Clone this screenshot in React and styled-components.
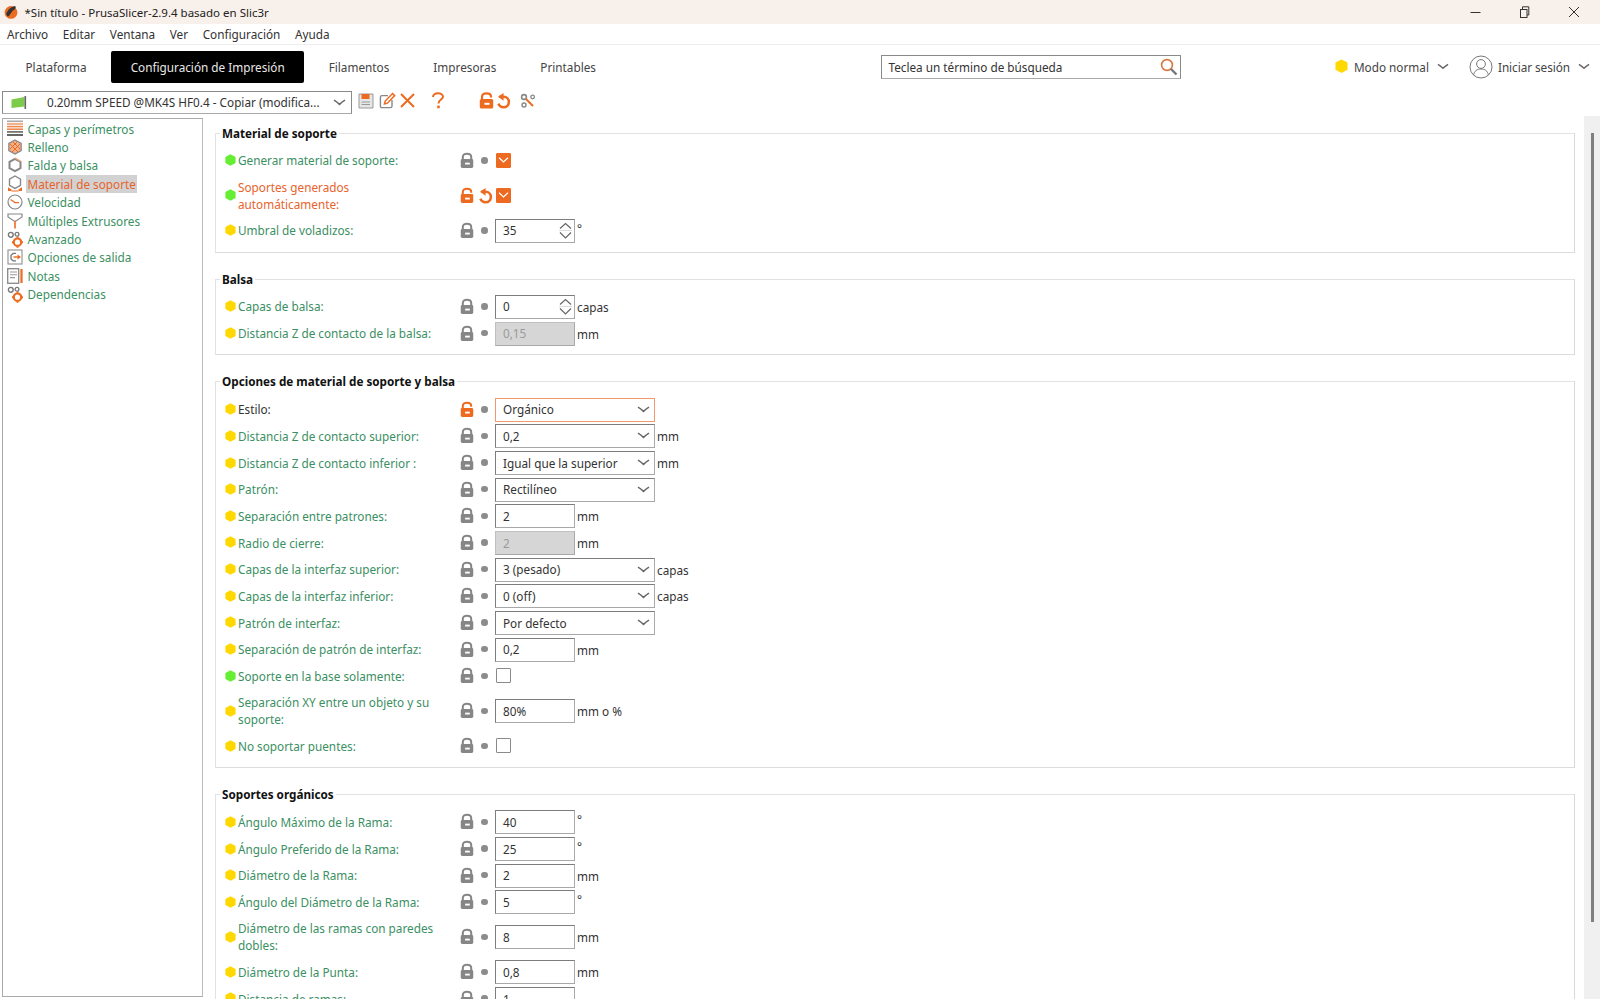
import React from "react";
import styled, { createGlobalStyle } from "styled-components";

const ORANGE = "#ed6b21";
const GREEN = "#3b8f62";
const FONT = `"Noto Sans", "Open Sans", sans-serif`;

const Global = createGlobalStyle`
  html, body { margin: 0; padding: 0; height: 100%; overflow: hidden; background: #fff; }
  body { font-family: ${FONT}; font-size: 11.75px; color: #333; }
  #root { height: 100%; }
  * { box-sizing: border-box; }
`;

const Page = styled.div`display: flex; flex-direction: column; height: 999px; overflow: hidden;`;

const TitleBar = styled.div`display: flex; align-items: center; height: 24px; background: #f8f0eb; padding-left: 4px;`;
const TitleText = styled.span`margin-left: 6.5px; font-size: 11.5px; color: #222;`;
const WinControls = styled.div`margin-left: auto; display: flex; padding-right: 2px;`;
const WinButton = styled.div`width: 49px; height: 24px; display: flex; align-items: center; justify-content: center; color: #333;`;

const MenuBar = styled.div`display: flex; gap: 14.6px; align-items: center; padding-left: 7px; border-bottom: 1px solid #eee; height: 21px; color: #333;`;

const TabRow = styled.div`display: flex; align-items: center; height: 45px; padding: 0 0 1.5px 6px;`;
const Tab = styled.div`
  padding: 0 19.5px; height: 32px; display: flex; align-items: center; margin-right: 5px; border-radius: 2px;
  background: ${p => (p.$active ? "#000" : "transparent")};
  color: ${p => (p.$active ? "#e8e8e8" : "#444")};
`;
const Search = styled.div`
  margin-left: 261px; width: 300px; height: 24px; border: 1px solid #8a8a8a; border-bottom-color: #aaa; display: flex; align-items: center;
  justify-content: space-between; padding: 0 1px 0 6px; color: #333;
`;
const RightTools = styled.div`margin-left: auto; display: flex; align-items: center; padding-right: 10px;`;
const ModeText = styled.span`margin-left: 6px; margin-right: 8px; color: #444;`;
const LoginText = styled.span`margin-left: 5px; margin-right: 8px; color: #444; letter-spacing: -0.05px;`;
const UserWrap = styled.span`margin-left: 20px; display: flex;`;

const Toolbar = styled.div`display: flex; align-items: center; height: 25px; padding-left: 2px;`;
const Combo = styled.div`
  width: 350px; height: 23px; border: 1px solid #8a8a8a; border-bottom-color: #aaa; display: flex; align-items: center; padding: 0 5px 1px 8px;
`;
const ComboText = styled.span`margin-left: 20px; flex: 1; white-space: nowrap; color: #333;`;
const ToolIcons = styled.div`display: flex; align-items: center; margin: -4px 0 0 6px;`;
const ToolIcon = styled.span`display: flex; margin-right: ${p => p.$mr || 0}px;`;

const Main = styled.div`flex: 1; display: flex; min-height: 0; padding-top: 1px;`;

const Tree = styled.nav`
  width: 201px; margin: 2px 0 2px 2px; border: 1px solid #aaa; border-right-color: #bbb; padding: 0.5px 0 0 4px; flex: none;
`;
const TreeItem = styled.div`display: flex; align-items: center; height: 18.4px;`;
const TreeIconBox = styled.span`width: 19px; height: 18px; display: flex; align-items: center; justify-content: flex-start; flex: none;`;
const TreeLabel = styled.span`
  color: ${p => (p.$active ? "#e8632b" : GREEN)};
  background: ${p => (p.$active ? "#d2d2d2" : "transparent")};
  padding: 0 1.5px; line-height: 18px;
`;

const Content = styled.div`flex: 1; min-width: 0; overflow: hidden; padding: 16.5px 9px 0 12px;`;
const Scrollbar = styled.div`width: 16px; flex: none; background: #f0f0f0; padding-top: 17px; padding-left: 7px;`;
const Thumb = styled.div`width: 2.5px; height: 789px; background: #808080;`;

const Group = styled.section`
  border: 1px solid #e2e2e2; border-bottom-color: #dcdcdc; border-right-color: #d8d8d8; padding: 0 9px 7.5px; margin-bottom: 26px;
`;
const GroupTitle = styled.h3`
  margin: -10px 0 6px -5px; padding: 0 2px; height: 18px; line-height: 18px; width: fit-content; background: #fff; font-size: 11.7px; font-weight: 700; color: #111;
`;
const Row = styled.div`
  display: grid; grid-template-columns: 13px 222px 14px 21px auto; align-items: center;
  min-height: ${p => (p.$tall ? 43.3 : 26.67)}px;
`;
const Label = styled.div`
  white-space: pre-line; line-height: 17px;
  color: ${p => (p.$state === "changed" ? "#e8632b" : p.$state === "dark" ? "#333" : GREEN)};
`;
const Dot = styled.span`width: 6.5px; height: 6.5px; border-radius: 50%; background: #8c8c8c; justify-self: center; margin-top: -1px;`;
const Cell = styled.div`display: flex; align-items: center; justify-content: center;`;
const ControlRow = styled.div`display: flex; align-items: center;`;
const Field = styled.div`
  height: 24px; width: ${p => (p.$wide ? 160 : 80)}px; display: flex; align-items: center; justify-content: space-between; padding: 0 3px 1px 7px;
  border: 1px solid ${p => (p.$accent ? "#ef9a68" : p.$disabled ? "#c0c0c0" : "#7d7d7d")};
  border-right-color: ${p => (p.$accent ? "#ef9a68" : "#aaa")};
  border-bottom-color: ${p => (p.$accent ? "#ef9a68" : "#a8a8a8")};
  background: ${p => (p.$disabled ? "#d6d6d6" : "#fff")};
  color: ${p => (p.$disabled ? "#9a9a9a" : "#333")};
`;
const Unit = styled.span`margin-left: 2px; color: #333; line-height: ${p => (p.$deg ? "12px" : "inherit")}; margin-top: ${p => (p.$deg ? -6 : 0)}px;`;
const CheckBox = styled.span`
  width: 15px; height: 15px; margin: 0 0 1px 1px; display: flex; align-items: center; justify-content: center; border-radius: 1px;
  background: ${p => (p.$on ? ORANGE : "#fff")};
  border: 1px solid ${p => (p.$on ? ORANGE : "#8a8a8a")};
`;

const Lock = ({ open }) => (
  <svg width="15" height="17" viewBox="0 0 15 17" style={{ marginTop: -1 }}>
    {open ? (
      <path d="M3 8V4.8C3 2.6 4.8 1.3 7.5 1.3S12 2.6 12 4.6V5.6" fill="none" stroke={ORANGE} strokeWidth="2.2" />
    ) : (
      <path d="M3 8V4.8C3 2.6 4.8 1.3 7.5 1.3S12 2.6 12 4.8V8" fill="none" stroke="#868686" strokeWidth="2.2" />
    )}
    <rect x="0.8" y="7" width="13.4" height="9.5" rx="1.6" fill={open ? ORANGE : "#868686"} />
    <rect x="5.5" y="10.8" width="5" height="2" fill="#fff" />
  </svg>
);
const Undo = () => (
  <svg width="16" height="16" viewBox="0 0 15 15">
    <path d="M4 3.6H8.2C11 3.8 13 5.9 13 8.4C13 11.2 10.8 13.4 8 13.4C5.8 13.4 3.9 12 3.2 10" fill="none" stroke={ORANGE} strokeWidth="2.4" />
    <path d="M8 0V7.2L2.8 3.6Z" fill={ORANGE} />
  </svg>
);
const Chevron = ({ w = 13, color = "#666" }) => (
  <svg width={w} height="7" viewBox="0 0 13 7"><path d="M1 1.2C3 2.4 5 4 6.5 5.4C8 4 10 2.4 12 1.2" fill="none" stroke={color} strokeWidth="1.5" /></svg>
);
const Spin = () => (
  <svg width="15" height="21" viewBox="0 0 15 21" style={{ marginRight: -2 }}>
    <path d="M2 8.5L7.5 3.5L13 8.5" fill="none" stroke="#666" strokeWidth="1.2" />
    <path d="M1 10.5H14" stroke="#ddd" strokeWidth="1" />
    <path d="M2 12.5L7.5 18L13 12.5" fill="none" stroke="#666" strokeWidth="1.2" />
  </svg>
);
const Hex = ({ c, size = 11 }) => (
  <svg width={size} height={size * 1.1} viewBox="0 0 11 12" style={{ marginTop: -1 }}><path d="M5.5 0.3L10.6 3V9L5.5 11.7L0.4 9V3Z" fill={c} /></svg>
);
const Tick = () => (
  <svg width="11" height="8" viewBox="0 0 11 8"><path d="M1 1.8L5.5 6L10 1.8" fill="none" stroke="#fff" strokeWidth="1.2" /></svg>
);

const gears = (
  <svg width="17" height="17" viewBox="0 0 17 17">
    <circle cx="3.8" cy="3.8" r="2.4" fill="none" stroke="#777" strokeWidth="1.4" />
    <circle cx="10" cy="3.2" r="1.9" fill="none" stroke="#777" strokeWidth="1.3" />
    <circle cx="10.5" cy="11.2" r="3.7" fill="none" stroke={ORANGE} strokeWidth="2.2" />
    <path d="M10.5 5.7V7.5M10.5 15V16.8M5 11.2H6.8M14.2 11.2H16" stroke={ORANGE} strokeWidth="2" />
  </svg>
);
const icons = {
  layers: (
    <svg width="16" height="17" viewBox="0 0 16 17">
      <rect y="0.5" width="16" height="1.6" fill="#aaa" /><rect y="3.2" width="16" height="1.6" fill="#f0a070" />
      <rect y="5.8" width="16" height="1.6" fill="#ed8a50" /><rect y="8.4" width="16" height="1.6" fill="#ed8a50" />
      <rect y="11" width="16" height="1.8" fill="#777" /><rect y="14" width="16" height="2" fill="#666" />
    </svg>
  ),
  infill: (
    <svg width="16" height="16" viewBox="0 0 16 16">
      <path d="M8 1L14.2 4.4V11.6L8 15L1.8 11.6V4.4Z" fill="#f4b08a" stroke="#888" strokeWidth="1.2" />
      <path d="M3 5L11 13M6 3L13.5 10.5M13 5L5 13M10 3L2.5 10.5" stroke={ORANGE} strokeWidth="1" />
    </svg>
  ),
  skirt: (
    <svg width="16" height="16" viewBox="0 0 16 16">
      <path d="M8 1.8L13.5 4.9V11.1L8 14.2L2.5 11.1V4.9Z" fill="none" stroke="#888" strokeWidth="2" />
      <path d="M8 1L14 4.5" stroke="#f2a878" strokeWidth="1.3" />
    </svg>
  ),
  support: (
    <svg width="16" height="17" viewBox="0 0 16 17">
      <path d="M8 1L13.5 4.2V10.4L8 13.4L2.5 10.4V4.2Z" fill="none" stroke="#888" strokeWidth="1.4" />
      <path d="M1 16V12.2L4.5 14.5V16ZM15 16V12.2L11.5 14.5V16Z" fill={ORANGE} />
      <path d="M4.5 16H11.5" stroke={ORANGE} strokeWidth="1" />
    </svg>
  ),
  speed: (
    <svg width="16" height="16" viewBox="0 0 16 16">
      <circle cx="8" cy="8" r="7" fill="none" stroke="#888" strokeWidth="1.2" />
      <path d="M3.6 5.4L8 8.6H12" fill="none" stroke={ORANGE} strokeWidth="1.2" />
    </svg>
  ),
  extruder: (
    <svg width="16" height="16" viewBox="0 0 16 16">
      <path d="M1 1H15V4L9 8H7L1 4Z" fill="none" stroke="#888" strokeWidth="1.2" />
      <path d="M8 8V15.5" stroke={ORANGE} strokeWidth="1.6" />
    </svg>
  ),
  gears,
  output: (
    <svg width="16" height="16" viewBox="0 0 16 16">
      <rect x="1" y="1" width="14" height="14" fill="none" stroke="#999" strokeWidth="1.2" />
      <path d="M9 4.4H6.2L4 6.2V10L6.2 11.8H9" fill="none" stroke="#777" strokeWidth="1.3" />
      <path d="M6.5 8H11" stroke={ORANGE} strokeWidth="1.4" /><path d="M10.5 5.4L14 8L10.5 10.6Z" fill={ORANGE} />
    </svg>
  ),
  notes: (
    <svg width="16" height="16" viewBox="0 0 16 16">
      <rect x="0.7" y="0.7" width="11" height="14.6" fill="none" stroke="#888" strokeWidth="1.3" />
      <path d="M3 4H10M3 6.8H10M3 9.6H8" stroke="#999" strokeWidth="1.1" />
      <rect x="13.4" y="1" width="2.2" height="14" fill={ORANGE} />
    </svg>
  ),
};

const tree = [
  ["layers", "Capas y perímetros"], ["infill", "Relleno"], ["skirt", "Falda y balsa"], ["support", "Material de soporte", true],
  ["speed", "Velocidad"], ["extruder", "Múltiples Extrusores"], ["gears", "Avanzado"], ["output", "Opciones de salida"],
  ["notes", "Notas"], ["gears", "Dependencias"],
];

const Y = "#ffd800", G = "#66ee33";
const groups = [
  { title: "Material de soporte", rows: [
    { h: G, l: "Generar material de soporte:", t: "check", on: true },
    { h: G, l: "Soportes generados\nautomáticamente:", t: "check", on: true, state: "changed", changed: true, tall: true },
    { h: Y, l: "Umbral de voladizos:", t: "spin", v: "35", u: "°" },
  ]},
  { title: "Balsa", rows: [
    { h: Y, l: "Capas de balsa:", t: "spin", v: "0", u: "capas" },
    { h: Y, l: "Distancia Z de contacto de la balsa:", t: "num", v: "0,15", u: "mm", dis: true },
  ]},
  { title: "Opciones de material de soporte y balsa", rows: [
    { h: Y, l: "Estilo:", t: "sel", v: "Orgánico", state: "dark", openLock: true, accent: true },
    { h: Y, l: "Distancia Z de contacto superior:", t: "sel", v: "0,2", u: "mm" },
    { h: Y, l: "Distancia Z de contacto inferior :", t: "sel", v: "Igual que la superior", u: "mm" },
    { h: Y, l: "Patrón:", t: "sel", v: "Rectilíneo" },
    { h: Y, l: "Separación entre patrones:", t: "num", v: "2", u: "mm" },
    { h: Y, l: "Radio de cierre:", t: "num", v: "2", u: "mm", dis: true },
    { h: Y, l: "Capas de la interfaz superior:", t: "sel", v: "3 (pesado)", u: "capas" },
    { h: Y, l: "Capas de la interfaz inferior:", t: "sel", v: "0 (off)", u: "capas" },
    { h: Y, l: "Patrón de interfaz:", t: "sel", v: "Por defecto" },
    { h: Y, l: "Separación de patrón de interfaz:", t: "num", v: "0,2", u: "mm" },
    { h: G, l: "Soporte en la base solamente:", t: "check" },
    { h: Y, l: "Separación XY entre un objeto y su\nsoporte:", t: "num", v: "80%", u: "mm o %", tall: true },
    { h: Y, l: "No soportar puentes:", t: "check" },
  ]},
  { title: "Soportes orgánicos", rows: [
    { h: Y, l: "Ángulo Máximo de la Rama:", t: "num", v: "40", u: "°" },
    { h: Y, l: "Ángulo Preferido de la Rama:", t: "num", v: "25", u: "°" },
    { h: Y, l: "Diámetro de la Rama:", t: "num", v: "2", u: "mm" },
    { h: Y, l: "Ángulo del Diámetro de la Rama:", t: "num", v: "5", u: "°" },
    { h: Y, l: "Diámetro de las ramas con paredes\ndobles:", t: "num", v: "8", u: "mm", tall: true },
    { h: Y, l: "Diámetro de la Punta:", t: "num", v: "0,8", u: "mm" },
    { h: Y, l: "Distancia de ramas:", t: "num", v: "1" },
  ]},
];

const Control = ({ r }) => {
  if (r.t === "check") return <CheckBox $on={r.on}>{r.on && <Tick />}</CheckBox>;
  return (
    <>
      <Field $wide={r.t === "sel"} $disabled={r.dis} $accent={r.accent}>
        <span>{r.v}</span>
        {r.t === "sel" && <span style={{ display: "flex", marginRight: 1 }}><Chevron /></span>}
        {r.t === "spin" && <Spin />}
      </Field>
      {r.u && <Unit $deg={r.u === "°"}>{r.u}</Unit>}
    </>
  );
};

export default function App() {
  return (
    <Page>
      <Global />
      <TitleBar>
        <svg width="14" height="16" viewBox="0 0 12 14">
          <circle cx="6" cy="7.4" r="5.6" fill={ORANGE} />
          <path d="M1.8 9C3 5 6 2.5 9.5 1.8C11 3 9.5 5 7.5 6L4 10.8C3 11 2.2 10 1.8 9Z" fill="#333" />
        </svg>
        <TitleText>*Sin título - PrusaSlicer-2.9.4 basado en Slic3r</TitleText>
        <WinControls>
          <WinButton><svg width="11" height="11" viewBox="0 0 11 11"><path d="M0.5 5.5H10.5" stroke="#333" /></svg></WinButton>
          <WinButton><svg width="11" height="12" viewBox="0 0 11 12"><rect x="1.5" y="3.5" width="6.5" height="8" fill="none" stroke="#333" /><path d="M3.5 3.5V0.8H9.8V9H8" fill="none" stroke="#333" /></svg></WinButton>
          <WinButton><svg width="12" height="12" viewBox="0 0 12 12"><path d="M1 1L11 11M11 1L1 11" stroke="#333" /></svg></WinButton>
        </WinControls>
      </TitleBar>
      <MenuBar>
        {["Archivo", "Editar", "Ventana", "Ver", "Configuración", "Ayuda"].map(m => <span key={m}>{m}</span>)}
      </MenuBar>
      <TabRow>
        <Tab>Plataforma</Tab>
        <Tab $active>Configuración de Impresión</Tab>
        <Tab>Filamentos</Tab>
        <Tab>Impresoras</Tab>
        <Tab>Printables</Tab>
        <Search>
          <span>Teclea un término de búsqueda</span>
          <svg width="20" height="18" viewBox="0 0 20 18">
            <circle cx="8" cy="7" r="5.4" fill="none" stroke="#d9773f" strokeWidth="1.6" />
            <path d="M12 11L17.5 16.5" stroke="#777" strokeWidth="2.4" />
          </svg>
        </Search>
        <RightTools>
          <Hex c="#ffd800" size={13} />
          <ModeText>Modo normal</ModeText>
          <Chevron w={12} />
          <UserWrap>
            <svg width="24" height="24" viewBox="0 0 24 24">
              <circle cx="12" cy="12" r="11" fill="none" stroke="#777" strokeWidth="1" />
              <circle cx="12" cy="9" r="4.4" fill="none" stroke="#777" strokeWidth="1" />
              <path d="M4.6 20C5.5 15.8 8 14 12 14S18.5 15.8 19.4 20" fill="none" stroke="#777" strokeWidth="1" />
            </svg>
          </UserWrap>
          <LoginText>Iniciar sesión</LoginText>
          <Chevron w={12} />
        </RightTools>
      </TabRow>
      <Toolbar>
        <Combo>
          <svg width="16" height="13" viewBox="0 0 16 13">
            <path d="M0.5 3.5L13.5 1V10.5L0.5 12Z" fill="#7ccb4a" /><rect x="13.5" y="0" width="1.6" height="13" fill="#666" />
          </svg>
          <ComboText>0.20mm SPEED @MK4S HF0.4 - Copiar (modifica...</ComboText>
          <Chevron />
        </Combo>
        <ToolIcons>
          <ToolIcon $mr={5}>
            <svg width="16" height="16" viewBox="0 0 16 16">
              <path d="M1 1H15V15H1Z" fill="#e6e6e6" stroke="#999" /><rect x="3.5" y="1" width="8" height="5" fill={ORANGE} />
              <path d="M3.5 9H12M3.5 11.5H12" stroke="#999" />
            </svg>
          </ToolIcon>
          <ToolIcon $mr={4}>
            <svg width="17" height="17" viewBox="0 0 17 17">
              <path d="M13 8V14C13 15 12.4 15.6 11.4 15.6H3C2 15.6 1.4 15 1.4 14V5.2C1.4 4.2 2 3.6 3 3.6H9" fill="none" stroke="#888" strokeWidth="1.4" />
              <path d="M5.5 12L6.2 9L13.5 1.5L15.7 3.6L8.4 11.2Z" fill="none" stroke={ORANGE} strokeWidth="1.5" />
            </svg>
          </ToolIcon>
          <ToolIcon $mr={16}>
            <svg width="15" height="15" viewBox="0 0 15 15"><path d="M1 1L14 14M14 1L1 14" stroke={ORANGE} strokeWidth="2" /></svg>
          </ToolIcon>
          <ToolIcon $mr={34}>
            <svg width="14" height="17" viewBox="0 0 14 17">
              <path d="M2 5C2 2.6 4 1.2 7 1.2S12 2.8 12 4.8C12 7.6 7.5 7.6 7.5 11.5" fill="none" stroke={ORANGE} strokeWidth="2" />
              <rect x="6.2" y="13.6" width="2.6" height="2.6" fill={ORANGE} />
            </svg>
          </ToolIcon>
          <ToolIcon $mr={1}><Lock open /></ToolIcon>
          <ToolIcon $mr={9}><Undo /></ToolIcon>
          <ToolIcon>
            <svg width="16" height="16" viewBox="0 0 16 16">
              <circle cx="4" cy="4" r="2.4" fill="none" stroke="#888" strokeWidth="1.6" />
              <circle cx="4" cy="12" r="2" fill="none" stroke="#888" strokeWidth="1.4" />
              <circle cx="12.6" cy="4" r="1.8" fill="none" stroke="#888" strokeWidth="1.3" />
              <path d="M6 6L13 13" stroke={ORANGE} strokeWidth="2" />
            </svg>
          </ToolIcon>
        </ToolIcons>
      </Toolbar>
      <Main>
        <Tree>
          {tree.map(([ic, label, active]) => (
            <TreeItem key={label}>
              <TreeIconBox>{icons[ic]}</TreeIconBox>
              <TreeLabel $active={active}>{label}</TreeLabel>
            </TreeItem>
          ))}
        </Tree>
        <Content>
          {groups.map(g => (
            <Group key={g.title}>
              <GroupTitle>{g.title}</GroupTitle>
              {g.rows.map(r => (
                <Row key={r.l} $tall={r.tall}>
                  <Hex c={r.h} />
                  <Label $state={r.state}>{r.l}</Label>
                  <Cell><Lock open={r.changed || r.openLock} /></Cell>
                  {r.changed ? <Cell><Undo /></Cell> : <Dot />}
                  <ControlRow><Control r={r} /></ControlRow>
                </Row>
              ))}
            </Group>
          ))}
        </Content>
        <Scrollbar><Thumb /></Scrollbar>
      </Main>
    </Page>
  );
}
